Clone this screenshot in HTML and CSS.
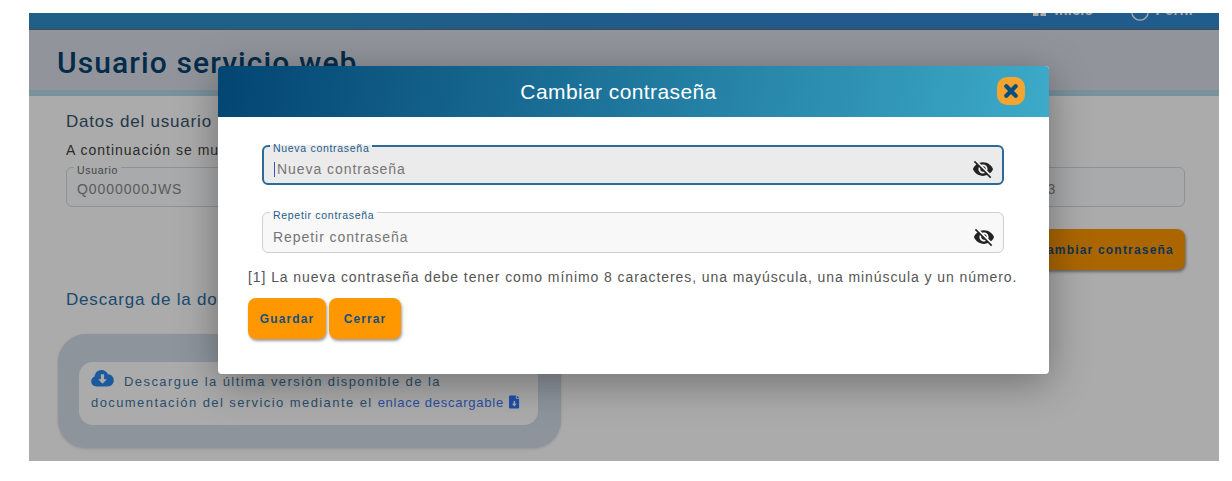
FILE: index.html
```html
<!DOCTYPE html>
<html lang="es">
<head>
<meta charset="utf-8">
<title>Usuario servicio web</title>
<link rel="stylesheet" href="styles.css">
</head>
<body>

<div class="app">

	<div class="navbar">
		<span class="navitem">
			<svg class="icono-inicio" viewBox="0 0 13 11"><path d="M0 0h5.500v4.800H0zM7.500 0H13v4.800H7.500zM0 6.200h5.500V11H0zM7.500 6.200H13V11H7.500z"/></svg>
			Inicio
		</span>
		<span class="navitem navitem-perfil">
			<svg class="icono-perfil" viewBox="0 0 18 18"><circle cx="9" cy="9" r="8.200"/><circle cx="9" cy="6" r="3"/></svg>
			Perfil
		</span>
	</div>

	<div class="cabecera">
		<h1>Usuario servicio web</h1>
	</div>

	<div class="contenido">
		<h2>Datos del usuario</h2>
		<p class="intro">A continuación se muestran los datos del usuario</p>

		<div class="datos">
			<fieldset class="campo campo-fondo">
				<legend>Usuario</legend>
				<div class="valor">Q0000000JWS</div>
			</fieldset>
			<fieldset class="campo campo-fondo">
				<legend>Nombre</legend>
				<div class="valor">Servicio web</div>
			</fieldset>
			<fieldset class="campo campo-fondo">
				<legend>Última modificación</legend>
				<div class="valor">Última modificación 12/05/2023</div>
			</fieldset>
		</div>

		<div class="acciones">
			<button class="btn btn-cambiar">Cambiar contraseña</button>
		</div>

		<h2 class="azul">Descarga de la documentación</h2>

		<div class="descarga">
			<div class="descarga-texto">
				<svg class="icono-nube" viewBox="0 0 24 18"><path fill-rule="evenodd" d="M5.500 17.500C2.500 17.500 0 15 0 12c0-2.400 1.500-4.400 3.600-5.200C3.900 3 7.200 0 11 0c3 0 5.600 1.800 6.800 4.400C21.200 4.500 24 7.300 24 10.900c0 3.700-3 6.600-6.600 6.600zM10.300 4.500v5.300H7.400l4.600 4.700 4.600-4.700h-2.900V4.500z"/></svg>
				<span class="sangria">Descargue la última versión disponible de la</span><br>
				documentación del servicio mediante el <a href="#">enlace descargable</a>
				<svg class="icono-doc" viewBox="0 0 12 14"><path fill-rule="evenodd" d="M1 0h6.500v3.500H11V13a1 1 0 0 1-1 1H1a1 1 0 0 1-1-1V1a1 1 0 0 1 1-1zM8.500 0L11 2.500H8.500zM5 6v3H3.200L5.800 11.800 8.400 9H6.700V6z"/></svg>
			</div>
		</div>
	</div>

	<div class="overlay">
		<div class="modal">
			<div class="modal-cabecera">
				<span class="modal-titulo">Cambiar contraseña</span>
				<button class="cerrar" aria-label="Cerrar">
					<svg viewBox="0 0 12 12"><path d="M2 2l8 8M10 2l-8 8"/></svg>
				</button>
			</div>
			<div class="modal-cuerpo">
				<fieldset class="campo campo-modal campo-activo">
					<legend>Nueva contraseña</legend>
					<div class="fila">
						<span class="cursor"></span>
						<input type="text" placeholder="Nueva contraseña">
						<svg class="ojo" viewBox="0 0 24 24"><path d="M12 7c2.760 0 5 2.240 5 5 0 .65-.13 1.260-.36 1.830l2.920 2.920c1.510-1.260 2.700-2.890 3.430-4.750-1.730-4.390-6-7.500-11-7.500-1.400 0-2.740.25-3.980.7l2.160 2.160C10.740 7.130 11.350 7 12 7zM2 4.270l2.280 2.280.46.46C3.080 8.300 1.780 10.020 1 12c1.730 4.390 6 7.500 11 7.500 1.550 0 3.030-.3 4.380-.84l.42.42L19.730 22 21 20.730 3.270 3 2 4.270zM7.530 9.800l1.550 1.550c-.05.21-.08.43-.08.65 0 1.660 1.340 3 3 3 .22 0 .44-.03.65-.08l1.550 1.550c-.67.33-1.410.53-2.200.53-2.760 0-5-2.240-5-5 0-.79.2-1.530.53-2.200zm4.310-.78l3.150 3.150.02-.16c0-1.660-1.340-3-3-3l-.17.01z"/></svg>
					</div>
				</fieldset>
				<fieldset class="campo campo-modal">
					<legend>Repetir contraseña</legend>
					<div class="fila">
						<input type="text" placeholder="Repetir contraseña">
						<svg class="ojo" viewBox="0 0 24 24"><path d="M12 7c2.760 0 5 2.240 5 5 0 .65-.13 1.260-.36 1.830l2.920 2.920c1.510-1.260 2.700-2.890 3.430-4.750-1.730-4.390-6-7.500-11-7.500-1.400 0-2.740.25-3.980.7l2.160 2.160C10.740 7.130 11.350 7 12 7zM2 4.270l2.280 2.280.46.46C3.080 8.300 1.780 10.020 1 12c1.730 4.390 6 7.500 11 7.500 1.550 0 3.030-.3 4.380-.84l.42.42L19.730 22 21 20.730 3.270 3 2 4.270zM7.530 9.800l1.550 1.550c-.05.21-.08.43-.08.65 0 1.660 1.340 3 3 3 .22 0 .44-.03.65-.08l1.550 1.550c-.67.33-1.410.53-2.200.53-2.760 0-5-2.240-5-5 0-.79.2-1.530.53-2.200zm4.310-.78l3.150 3.150.02-.16c0-1.660-1.340-3-3-3l-.17.01z"/></svg>
					</div>
				</fieldset>
				<p class="nota">[1] La nueva contraseña debe tener como mínimo 8 caracteres, una mayúscula, una minúscula y un número.</p>
				<div class="botones">
					<button class="btn btn-guardar">Guardar</button>
					<button class="btn btn-cerrar">Cerrar</button>
				</div>
			</div>
		</div>
	</div>

</div>

</body>
</html>
```

FILE: styles.css
```css
html, body {
	margin: 0;
	padding: 0;
	background: #fff;
	overflow: hidden;
}
body {
	height: 481px;
	font-family: "Liberation Sans", Arial, sans-serif;
}
.app {
	position: relative;
	margin: 13px 13px 0 29px;
	height: 448px;
	overflow: hidden;
	background: #fff;
}

/* barra superior, recortada por arriba */
.navbar {
	height: 16px;
	border-bottom: 1px solid #6f6f6f;
	background: linear-gradient(90deg, #308ecb, #2e8fcb 25%, #3386d1 60%, #3189d1);
	display: flex;
	justify-content: flex-end;
	align-items: flex-start;
	gap: 37px;
	padding-right: 26px;
	overflow: hidden;
	color: #fff;
	font-size: 14px;
	font-weight: bold;
	letter-spacing: 0.4px;
}
.navitem {
	display: flex;
	align-items: flex-start;
	gap: 9px;
	flex: none;
	margin-top: -10px;
	line-height: 14px;
}
.navitem-perfil {
	gap: 7px;
}
.icono-inicio {
	width: 13px;
	height: 11px;
	margin-top: 2px;
	fill: #fff;
}
.icono-perfil {
	width: 18px;
	height: 18px;
	fill: none;
	stroke: #fff;
	stroke-width: 1.300;
}

.cabecera {
	height: 66px;
	box-sizing: border-box;
	background: #d8dfe8;
	border-bottom: 6px solid #b4d8e8;
	padding: 16px 0 0 28px;
}
h1 {
	margin: 0;
	font-family: Roboto, sans-serif;
	font-size: 30px;
	font-weight: 500;
	line-height: 33px;
	letter-spacing: 1.100px;
	color: #06426f;
}

.contenido {
	padding: 16px 34px 0 37px;
}
h2 {
	margin: 0;
	font-size: 17px;
	font-weight: normal;
	line-height: 20px;
	letter-spacing: 0.8px;
	color: #365470;
}
h2.azul {
	color: #2b6ea6;
	margin-top: 20px;
}
.intro {
	margin: 9px 0 0;
	font-size: 14px;
	line-height: 18px;
	letter-spacing: 1px;
	color: #3f3f3f;
}

.campo {
	margin: 0;
	padding: 0;
	min-width: 0;
	box-sizing: border-box;
	border-radius: 6px;
}
.campo legend {
	margin-left: 7px;
	padding: 5px 3px 0;
	font-size: 10.5px;
	line-height: 10px;
	letter-spacing: 0.7px;
}
.datos {
	display: grid;
	grid-template-columns: repeat(3, 1fr);
	gap: 14px;
	margin-top: 1px;
}
.campo-fondo {
	height: 47px;
	border: 1px solid #d5d8de;
	background: #fcfeff;
}
.campo-fondo legend {
	color: #666;
}
.valor {
	padding: 5px 0 0 10px;
	font-size: 14px;
	line-height: 18px;
	letter-spacing: 0.95px;
	color: #898989;
}

.btn {
	border: 0;
	border-radius: 8px;
	background: #ff9800;
	font-family: "Liberation Sans", Arial, sans-serif;
	font-size: 12px;
	font-weight: bold;
	letter-spacing: 1.100px;
	color: #174f7c;
	box-shadow: 1px 2px 3px rgba(0, 0, 0, 0.4);
}
.acciones {
	display: flex;
	justify-content: flex-end;
	margin-top: 22px;
}
.btn-cambiar {
	height: 41px;
	padding: 0 11px 0 25px;
	letter-spacing: 1.200px;
}

.descarga {
	width: 503px;
	height: 114px;
	box-sizing: border-box;
	margin: 24px 0 0 -8px;
	padding: 28px 23px 0 21px;
	border-radius: 28px;
	background: #d2dde9;
	box-shadow: 0 1px 3px rgba(0, 0, 0, 0.15);
}
.descarga-texto {
	height: 63px;
	box-sizing: border-box;
	padding: 8px 0 0 12px;
	border-radius: 14px;
	background: #fff;
	font-size: 13px;
	line-height: 21px;
	letter-spacing: 1.420px;
	color: #3f76a0;
}
.descarga-texto a {
	color: #3f76ef;
	text-decoration: none;
	letter-spacing: 0.75px;
}
.sangria {
	margin-left: 5px;
}
.icono-nube {
	width: 23px;
	height: 17px;
	fill: #2b86ec;
	vertical-align: -1px;
}
.icono-doc {
	width: 11px;
	height: 14px;
	fill: #2e76fb;
	vertical-align: -2px;
}

/* capa del dialogo */
.overlay {
	position: absolute;
	top: 0;
	left: 0;
	right: 0;
	bottom: 0;
	background: rgba(0, 0, 0, 0.33);
	padding: 53px 0 0 189px;
}
.modal {
	width: 831px;
	height: 308px;
	border-radius: 4px;
	background: #fff;
	overflow: hidden;
	box-shadow: 0 8px 40px rgba(0, 0, 0, 0.35);
}
.modal-cabecera {
	height: 51px;
	box-sizing: border-box;
	padding-right: 30px;
	display: flex;
	align-items: center;
	justify-content: center;
	position: relative;
	background: linear-gradient(100deg, #034573, #3caac8);
}
.modal-titulo {
	font-size: 21px;
	color: #fff;
	letter-spacing: 0.4px;
}
.cerrar {
	position: absolute;
	top: 11px;
	right: 24px;
	width: 28px;
	height: 28px;
	padding: 7px;
	border: 0;
	border-radius: 10px;
	background: #f4a42f;
}
.cerrar svg {
	display: block;
	fill: none;
	stroke: #064f80;
	stroke-width: 3.600;
	stroke-linecap: round;
}
.modal-cuerpo {
	padding: 21px 30px 0;
}
.campo-modal {
	width: 742px;
	height: 48px;
	margin: 0 0 15px 14px;
	border: 1px solid #cfcfcf;
	background: #f8f8f8;
}
.campo-modal legend {
	color: #1f5d8c;
}
.campo-activo {
	height: 47px;
	margin-bottom: 20px;
	border: 2px solid #2e6a98;
	background: #ebebeb;
}
.campo-activo legend {
	margin-left: 6px;
}
.fila {
	display: flex;
	align-items: center;
	padding: 6px 8px 0 10px;
}
.campo-activo .fila {
	padding-top: 5px;
}
.fila input {
	flex: 1;
	min-width: 0;
	padding: 0;
	border: 0;
	outline: 0;
	background: transparent;
	font-family: "Liberation Sans", Arial, sans-serif;
	font-size: 14px;
	line-height: 18px;
	letter-spacing: 0.95px;
}
.fila input::placeholder {
	color: #757575;
}
.cursor {
	width: 1px;
	height: 15px;
	margin-right: 2px;
	background: #3f51b5;
}
.ojo {
	width: 22px;
	height: 22px;
	fill: #222;
}
.nota {
	margin: 0;
	font-size: 14px;
	line-height: 18px;
	letter-spacing: 0.92px;
	color: #555;
}
.botones {
	display: flex;
	gap: 3px;
	margin-top: 12px;
}
.btn-guardar {
	width: 78px;
	height: 41px;
}
.btn-cerrar {
	width: 72px;
	height: 41px;
}
```
